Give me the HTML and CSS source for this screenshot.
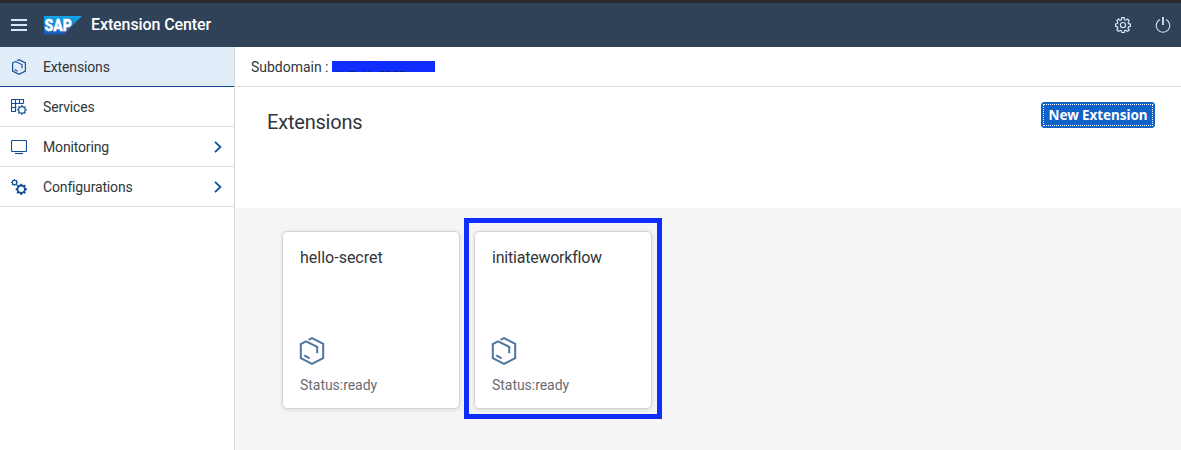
FILE: index.html
```html
<!DOCTYPE html>
<html lang="en">
<head>
<meta charset="utf-8">
<title>Extension Center</title>
<link rel="stylesheet" href="styles.css">
</head>
<body>
<svg class="defs" aria-hidden="true">
  <symbol id="hex" viewBox="0 0 26 28">
    <path d="M9.5 2.8 13 1.2 24.2 6.8v14.4L13 26.8 1.8 21.2V7L7 4.4 18.2 9.8v6.4M5.2 18.4l5.4 3"/>
  </symbol>
  <symbol id="gear" viewBox="0 0 16 16">
    <path d="M6.8.7h2.4l.4 2 1.3.5 1.7-1.1 1.6 1.6-1.1 1.8.5 1.2 1.8.4v2.2l-1.9.5-.5 1.3 1.2 1.7-1.7 1.6-1.7-1.1-1.2.5-.4 1.9H6.8l-.4-1.9-1.3-.5-1.7 1.1-1.6-1.7 1.1-1.6-.5-1.3-1.8-.5V6.9l1.8-.4.5-1.3-1.1-1.7L3.4 2l1.7 1.2 1.3-.5z"/>
    <circle cx="8" cy="8.1" r="2.6"/>
  </symbol>
  <symbol id="cog" viewBox="0 0 10 10">
    <circle cx="5" cy="5" r="3.2"/>
    <path d="M5 .1v1.6M5 8.3v1.6M.1 5h1.6M8.3 5h1.6M1.5 1.5l1.2 1.2M7.3 7.3l1.2 1.2M1.5 8.5l1.2-1.2M7.3 2.7l1.2-1.2"/>
  </symbol>
</svg>
<header class="shell">
  <svg class="menu" viewBox="0 0 16 12"><path d="M0 1h16M0 6h16M0 11h16"/></svg>
  <svg class="logo" viewBox="0 0 38 19">
    <defs><linearGradient id="sap" x2="0" y2="1"><stop stop-color="#12a5e8"/><stop offset="1" stop-color="#1d58b5"/></linearGradient></defs>
    <path fill="url(#sap)" d="M0 0h38L19.5 18.5H0z"/>
    <text x="0.5" y="14.8" textLength="27.5" lengthAdjust="spacingAndGlyphs">SAP</text>
  </svg>
  <h1 class="product">Extension Center</h1>
  <svg class="settings" viewBox="0 0 16 16"><use href="#gear"/></svg>
  <svg class="power" viewBox="0 0 16 18"><path d="M5 3.4a6.8 6.8 0 1 0 6 0"/><path class="bar" d="M8 1v8"/></svg>
</header>
<div class="body">
  <nav class="side">
    <a class="item active"><svg class="ico" viewBox="0 0 26 28"><use href="#hex"/></svg><span>Extensions</span></a>
    <a class="item"><svg class="ico" viewBox="0 0 16 16"><path d="M5 12.5H.5V.5h12v4M.5 4.5h12M.5 8.5h5M4.5.5v12M8.5.5v4.5"/><use href="#cog" x="5.8" y="5.8" width="10.2" height="10.2"/></svg><span>Services</span></a>
    <a class="item"><svg class="ico" viewBox="0 0 16 16"><rect x=".5" y="1.5" width="15" height="11" rx=".8"/><path d="M4 14.5h8"/></svg><span>Monitoring</span><svg class="chev" viewBox="0 0 8 12"><path d="m1 .8 5.4 5.2L1 11.2"/></svg></a>
    <a class="item"><svg class="ico heavy" viewBox="0 0 16 16"><use href="#cog" x="0" y="0" width="7" height="7"/><use href="#cog" x="4.4" y="4.4" width="11.6" height="11.6"/></svg><span>Configurations</span><svg class="chev" viewBox="0 0 8 12"><path d="m1 .8 5.4 5.2L1 11.2"/></svg></a>
  </nav>
  <main class="main">
    <div class="sub"><span class="label">Subdomain :</span><svg class="redact" viewBox="0 0 103 11"><path class="fill" d="M0 0h103v11H0z"/><path class="specks" d="M3 10.5h2M7 10.5h2M17 10.5h6M31 10.5h2M36 10.5h2M47 10.5h5M54 10.5h5M61 10.5h5M68 10.5h5M23 .5h1M38 .5h2"/></svg></div>
    <div class="head"><h2 class="title">Extensions</h2><button class="new">New Extension</button></div>
    <div class="tiles">
      <article class="tile"><h3 class="name">hello-secret</h3><svg class="tico" viewBox="0 0 26 28"><use href="#hex"/></svg><p class="status">Status:ready</p></article>
      <article class="tile marked"><h3 class="name tight">initiateworkflow</h3><svg class="tico" viewBox="0 0 26 28"><use href="#hex"/></svg><p class="status">Status:ready</p></article>
    </div>
  </main>
</div>
</body>
</html>
```
FILE: styles.css
```css
*, *::after { box-sizing: border-box; margin: 0; padding: 0; }
body { width: 1181px; height: 450px; overflow: hidden; display: flex; flex-direction: column; background: #fff; color: #32363a; font-family: Roboto, sans-serif; font-size: 14px; }
svg { fill: none; flex: none; }
.defs { position: absolute; width: 0; height: 0; }
.shell { height: 47px; flex: none; display: flex; align-items: center; padding: 0 10px 0 11px; background: #2f4257; border-top: 3px solid #292a2c; stroke: #d1e8ff; }
.menu { width: 16px; height: 12px; stroke-width: 1.8; }
.logo { width: 38px; height: 19px; margin-left: 17px; stroke: none; }
.logo text { fill: #fff; stroke: #fff; stroke-width: .4; font: 900 17px Roboto, sans-serif; }
.product { margin-left: 9px; color: #fff; font-size: 16px; font-weight: 500; line-height: 20px; letter-spacing: -.1px; stroke: none; }
.settings { width: 16px; height: 16px; margin-left: auto; stroke-width: 1.2; }
.power { width: 16px; height: 18px; margin-left: 24px; stroke-width: 1.1; }
.power .bar { stroke-width: 1.8; }
.body { flex: 1; display: flex; }
.side { width: 235px; flex: none; border-right: 1px solid #d9d9d9; }
.item { height: 40px; display: flex; align-items: center; padding: 0 12px 0 11px; border-bottom: 1px solid #e0e0e0; letter-spacing: -.15px; }
.item.active { background: #e1edf9; border-bottom-color: #0a4a99; }
.ico { width: 16px; height: 16px; margin-right: 16px; stroke: #134e9c; stroke-width: 1.15; }
.active .ico { stroke-width: 2; }
.heavy { stroke-width: 1.6; }
.chev { width: 8px; height: 12px; margin-left: auto; stroke: #134e9c; stroke-width: 1.8; }
.main { flex: 1; display: flex; flex-direction: column; }
.sub { height: 40px; display: flex; align-items: center; padding-left: 16px; border-bottom: 1px solid #e0e0e0; }
.label { width: 78px; letter-spacing: -.02px; white-space: nowrap; }
.redact { width: 103px; height: 11px; margin-left: 3px; }
.redact .fill { fill: #0f2dff; }
.redact .specks { stroke: #17206f; stroke-opacity: .85; }
.head { height: 121px; display: flex; justify-content: space-between; align-items: flex-start; padding: 15px 26px 0 32px; }
.title { margin-top: 8px; font-size: 20px; line-height: 24px; font-weight: 400; letter-spacing: -.2px; }
.new { width: 114px; height: 26px; background: #1062c8; border: 1px solid #1062c8; border-radius: 3px; outline: 1px dotted #fff; outline-offset: -3px; color: #fff; font: 700 13.5px/18px "Noto Sans", sans-serif; letter-spacing: -.08px; white-space: nowrap; }
.tiles { flex: 1; display: flex; align-items: flex-start; gap: 14px; padding: 23px 47px; background: #f5f5f5; }
.tile { width: 178px; height: 178px; display: flex; flex-direction: column; padding: 16px 17px; background: #fff; border: 1px solid #d2d2d2; border-radius: 5px; box-shadow: 0 1px 4px rgba(0,0,0,.1); }
.marked { position: relative; }
.marked::after { content: ""; position: absolute; left: -11px; top: -14px; width: 198px; height: 201px; border: 5px solid #0f2dff; }
.name { font-size: 16px; line-height: 20px; font-weight: 400; }
.tight { letter-spacing: -.22px; }
.tico { width: 26px; height: 28px; margin: 69px 0 11px -1px; stroke: #4f759e; stroke-width: 2; }
.status { color: #6a6d70; line-height: 18px; letter-spacing: -.04px; }
```
